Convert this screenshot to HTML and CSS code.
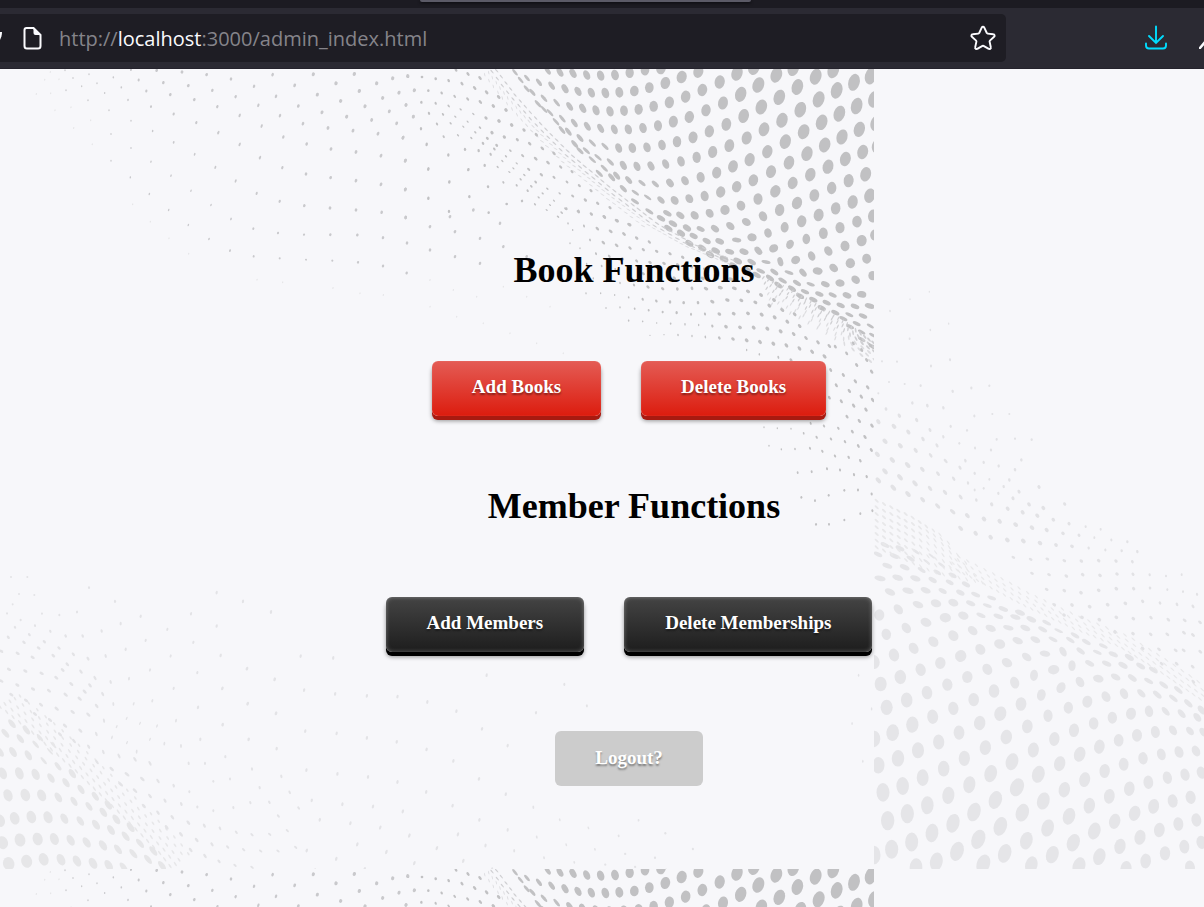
FILE: index.html
```html
<!DOCTYPE html>
<html lang="en">
<head>
<meta charset="utf-8">
<title>Library Admin</title>
<link rel="stylesheet" href="styles.css">
</head>
<body>
<header class="browser">
  <div class="tabs"><div class="active-tab"></div></div>
  <div class="toolbar">
    <div class="address">
      <svg class="edge-icon" viewBox="0 0 3 16" aria-hidden="true"><path d="M-1 2h3C2 6 .8 9-1 11z" fill="#fbfbfe"/></svg>
      <svg class="page-icon" viewBox="0 0 20 24" aria-hidden="true"><path d="M4 2h7l7 7v11a2.500 2.500 0 0 1-2.500 2.500h-11A2.500 2.500 0 0 1 2 20V4a2 2 0 0 1 2-2z" fill="none" stroke="#fbfbfe" stroke-width="2"/><path d="M11 2l7 7h-5a2 2 0 0 1-2-2z" fill="#fbfbfe"/></svg>
      <div class="url" role="textbox" aria-label="Address">http://<span class="host">localhost</span>:3000/admin_index.html</div>
      <button class="icon-button" aria-label="Bookmark this page"><svg viewBox="0 0 26 26"><path d="M11.700 2.600a1.450 1.450 0 0 1 2.600 0l2.500 5.400a1 1 0 0 0 .8.600l5.700.7a1.400 1.400 0 0 1 .8 2.500l-4.200 3.800a1 1 0 0 0-.3 1l1.200 5.600a1.400 1.400 0 0 1-2.100 1.600l-5.200-2.900a1 1 0 0 0-1 0l-5.200 2.900a1.400 1.400 0 0 1-2.100-1.600l1.200-5.600a1 1 0 0 0-.3-1l-4.200-3.800a1.400 1.400 0 0 1 .8-2.500l5.700-.7a1 1 0 0 0 .8-.6z" fill="none" stroke="#fbfbfe" stroke-width="1.900"/></svg></button>
    </div>
    <button class="icon-button download" aria-label="Downloads"><svg viewBox="0 0 24 26"><path d="M12 1.500v16M5 11l7 7 7-7M2 18.500v2a3 3 0 0 0 3 3h14a3 3 0 0 0 3-3v-2" fill="none" stroke="#00ddff" stroke-width="1.900" stroke-linecap="round"/></svg></button>
    <svg class="cut-icon" viewBox="0 0 5 12" aria-hidden="true"><path d="M1 11l5-6" stroke="#fbfbfe" stroke-width="2.500" stroke-linecap="round"/></svg>
  </div>
</header>
<main class="page">
  <svg class="waves" aria-hidden="true">
    <defs>
      <symbol id="wave-dark" viewBox="0 0 2622 2400"></symbol>
      <symbol id="wave-light" viewBox="0 0 2622 2400"></symbol>
    </defs>
    <use href="#wave-dark" width="874" height="800"/>
    <use href="#wave-dark" y="800" width="874" height="800"/>
    <use href="#wave-light" x="874" width="874" height="800"/>
  </svg>
  <div class="content">
    <h1 class="heading">Book Functions</h1>
    <div class="actions">
      <button class="btn red">Add Books</button>
      <button class="btn red">Delete Books</button>
    </div>
    <h1 class="heading">Member Functions</h1>
    <div class="actions">
      <button class="btn black">Add Members</button>
      <button class="btn black">Delete Memberships</button>
    </div>
    <button class="btn logout">Logout?</button>
  </div>
</main>
<script src="waves.js"></script>
</body>
</html>
```
FILE: styles.css
```css
* { box-sizing: border-box; }
body {
  margin: 0;
  min-height: 100vh;
  display: flex;
  flex-direction: column;
  background: #f7f7fa;
  font-family: "Liberation Serif", "Times New Roman", serif;
}
button { border: 0; font: inherit; cursor: pointer; }
.tabs {
  height: 8px;
  background: #1c1b22;
  display: flex;
  padding-left: 420px;
}
.active-tab {
  width: 331px;
  height: 2px;
  border-radius: 0 0 3px 3px;
  background: #5b5a66;
  box-shadow: 0 1px 3px #08080c;
}
.toolbar {
  display: flex;
  align-items: center;
  padding: 6px 0;
  background: #2b2a33;
  border-bottom: 1px solid #25232d;
}
.address {
  flex: 1;
  height: 48px;
  display: flex;
  align-items: center;
  padding-right: 10px;
  background: #1e1d24;
  border-radius: 0 5px 5px 0;
}
.edge-icon { width: 3px; height: 16px; margin-right: 19px; }
.page-icon { width: 21px; height: 24px; margin-right: 16px; }
.url {
  flex: 1;
  padding-top: 2px;
  font: 20px/28px "Open Sans", "Noto Sans", sans-serif;
  color: #85848a;
  white-space: nowrap;
}
.host { color: #fbfbfe; }
.icon-button {
  display: flex;
  padding: 0;
  background: none;
}
.icon-button svg { width: 26px; height: 26px; }
.download { margin: 0 31px 0 138px; }
.download svg { width: 24px; }
.cut-icon { width: 5px; height: 12px; margin-top: 10px; }
.page {
  position: relative;
  flex: 1;
  overflow: hidden;
}
.waves {
  position: absolute;
  inset: 0;
  width: 100%;
  height: 100%;
}
.content {
  position: relative;
  display: flex;
  flex-direction: column;
  align-items: center;
  padding: 181px 0 40px 54px;
}
.heading {
  margin: 0 0 70px;
  padding-left: 10px;
  font-size: 36px;
  line-height: 41px;
  color: #000;
}
.actions {
  display: flex;
  gap: 40px;
  margin-bottom: 70px;
}
.btn {
  height: 55px;
  padding: 0 40px 3px;
  border-radius: 6px;
  font-size: 19px;
  font-weight: bold;
  line-height: 22px;
  color: #fff;
  text-shadow: 0 2px 2px rgba(0, 0, 0, 0.4);
}
.red {
  background: linear-gradient(#e45c55, #dc1c0e);
  box-shadow: inset 0 0 1px rgba(255, 255, 255, 0.4), 0 4px 0 #a81a10, 0 5px 4px rgba(0, 0, 0, 0.4);
}
.black {
  padding-inline: 41px;
  background: linear-gradient(#444, #1d1d1d);
  box-shadow: inset 0 0 4px rgba(255, 255, 255, 0.35), 0 4px 0 #000, 0 5px 4px rgba(0, 0, 0, 0.4);
}
.logout {
  margin-top: 9px;
  padding-bottom: 2px;
  background: #ccc;
}
```
FILE: waves.js
```js
const NS = "http://www.w3.org/2000/svg";

// Each anchor is x y rx ry angle; a dot's shape is blended from the anchors near it.
function shapeAt(x, y, anchors) {
  let total = 0;
  const sum = [0, 0, 0];
  for (const a of anchors) {
    const w = 1 / (((x - a[0]) ** 2 + (y - a[1]) ** 2) ** 1.5 + 1);
    total += w;
    for (let i = 0; i < 3; i++) sum[i] += w * a[i + 2];
  }
  return sum.map(s => s / total);
}

function sheet(id, transform, color, anchors, text) {
  const group = document.createElementNS(NS, "g");
  group.setAttribute("transform", transform);
  group.setAttribute("fill", color);
  for (const pair of text.trim().split(/\s+/)) {
    const [x, y] = pair.split(",").map(Number);
    const [rx, ry, angle] = shapeAt(x, y, anchors);
    const dot = document.createElementNS(NS, "ellipse");
    dot.setAttribute("rx", rx.toFixed(1));
    dot.setAttribute("ry", ry.toFixed(1));
    dot.setAttribute("transform", `translate(${x} ${y}) rotate(${angle.toFixed(0)})`);
    group.append(dot);
  }
  document.getElementById(id).append(group);
}

// Dots spaced evenly along a polyline.
function along(points, step, dx = 0, dy = 0) {
  const out = [];
  let carry = 0;
  for (let i = 1; i < points.length; i++) {
    const [x1, y1] = points[i - 1], [x2, y2] = points[i];
    const len = Math.hypot(x2 - x1, y2 - y1);
    let d = carry;
    for (; d < len; d += step) {
      out.push(`${Math.round(x1 + (x2 - x1) * d / len + dx)},${Math.round(y1 + (y2 - y1) * d / len + dy)}`);
    }
    carry = d - len;
  }
  return out.join(" ");
}

const DARK = "#c1c1c3", MID = "#cfcfd2", PALE = "#dddde0", LIGHT = "#e6e6e8";

// Bold crest, upper right
sheet("wave-dark", "translate(1200 -27)", DARK, [
  [345, 37, 4, 12, -40], [534, 94, 9, 15, -30], [450, 158, 4, 14, -42], [616, 99, 11, 16, -20], [703, 93, 13, 16, 5],
  [594, 292, 4, 14, -48], [697, 264, 11, 15, -18], [743, 412, 4, 13, -55], [845, 51, 15, 19, 15], [1075, 75, 17, 24, 20],
  [1256, 118, 17, 25, 18], [1362, 67, 17, 26, 15], [868, 171, 14, 18, 10], [824, 421, 11, 14, -35], [1049, 299, 15, 20, 15],
  [1010, 380, 14, 17, 15], [1211, 215, 17, 23, 18], [1397, 343, 16, 22, 15], [1139, 450, 14, 17, 20]
], `345,37 443,32 480,37 519,40 560,45 602,47 645,45 689,38 735,30 783,25
362,60 381,54 417,67 455,77 495,86 534,94 574,98 616,99 658,97 703,93 748,83 796,69 845,51 895,35
397,97 432,115 470,128 509,139 548,145 588,151 630,154 672,152 716,148 761,139 808,127 857,110 907,90 959,66 1011,40 1062,22
380,86 414,131 450,158 487,176 523,189 562,199 602,205 643,208 685,208 729,204 774,197 820,185 868,171 918,151 969,129 1022,103 1075,75 1129,45 1180,25
432,148 468,185 505,215 540,234 577,249 615,259 656,264 697,264 741,262 786,255 831,245 879,232 928,214 979,193 1031,168 1084,141 1138,112 1192,81 1247,50 1300,30
486,210 524,252 559,272 594,292 631,306 670,316 711,319 753,318 797,312 843,304 890,292 938,276 988,257 1040,234 1092,208 1146,181 1201,149 1256,118 1310,91 1362,67 1412,48
540,272 577,299 613,325 650,347 686,360 726,369 766,372 810,369 855,362 902,352 950,338 999,319 1049,299 1102,275 1156,245 1211,215 1265,187 1318,161 1370,138 1422,118
598,340 635,352 670,386 706,398 743,412 783,420 824,421 868,416 914,408 962,396 1010,380 1060,361 1113,335 1167,308 1221,281 1274,255 1326,231 1378,208 1428,190
1231,344 1284,320 1336,297 1388,276 1432,258 1397,343`);

// Lower part of the crest, flattening toward the fold
sheet("wave-dark", "translate(1680 333)", DARK, [
  [246, 78, 5, 14, -55], [322, 100, 7, 14, -60], [404, 106, 11, 14, -40], [495, 90, 14, 15, 0], [646, 34, 15, 19, 20],
  [422, 147, 7, 13, -65], [530, 180, 7, 14, -82], [576, 172, 12, 14, -80], [641, 205, 12, 14, 60], [711, 69, 15, 19, 18],
  [929, 47, 16, 22, 15], [776, 105, 15, 19, 10], [905, 182, 15, 17, 10], [618, 246, 5, 14, -78], [707, 240, 12, 14, 60],
  [687, 278, 5, 14, -70], [773, 273, 11, 15, -80], [871, 250, 14, 15, 0], [752, 313, 5, 13, -70], [840, 309, 11, 14, -75],
  [938, 287, 13, 14, 0], [818, 345, 6, 13, -65], [905, 343, 10, 14, -80], [868, 404, 5, 13, -65], [929, 378, 8, 15, -75], [931, 438, 4, 12, -60]
], `322,100 361,106 404,106 449,100 495,90 543,77 594,57 646,34 698,9
225,64 268,94 303,115 339,131 381,144 422,147 465,146 511,138 559,126 609,109 659,90 711,69 763,46 815,24 866,2
325,145 363,160 401,168 440,183 479,184 530,180 576,172 624,159 674,142 725,124 776,105 827,85 878,66 929,47
388,190 426,204 467,212 509,215 552,215 595,212 641,205 690,193 739,177 790,160 840,143 891,125 939,108
450,224 492,237 533,243 575,246 618,246 661,245 707,240 755,228 805,213 855,198 905,182 945,165
520,258 560,268 602,273 643,276 687,278 729,278 773,273 821,264 871,250 920,236
590,285 630,294 668,302 711,309 752,313 796,313 840,309 887,299 938,287
655,315 696,326 735,335 778,342 818,345 861,346 905,343 720,348 760,359 800,368 842,376 885,379 929,378
785,384 826,398 868,404 909,408 850,416 890,431 931,438 870,440 905,456 938,466 905,478 938,500`);

// Tight pleats along the fold
const fold = [[290, 32], [345, 105], [430, 200], [520, 290], [640, 390], [770, 490], [880, 552], [1010, 605]];
const foldShape = [[290, 32, 2, 7, -42], [640, 390, 2, 8, -52], [960, 595, 2, 8, -68]];
sheet("wave-dark", "translate(1200 -27)", MID, foldShape, along(fold, 23));
sheet("wave-dark", "translate(1200 -27)", MID, foldShape, along(fold, 26, -14, 3));
const thinShape = [[290, 32, 1.500, 6, -15], [520, 290, 1.500, 7, -60], [960, 595, 1.500, 7, -68]];
sheet("wave-dark", "translate(1200 -27)", PALE, thinShape, along(fold, 19, -24, 6));
sheet("wave-dark", "translate(1200 -27)", PALE, thinShape, along(fold.slice(0, 6), 22, -36, 12));
const pleats = [[610, 285], [690, 322], [760, 362], [840, 410], [940, 480]];
const pleatShape = [[640, 300, 2, 6, 35], [800, 420, 2, 7, 28], [930, 530, 3, 8, -45]];
for (let i = 0; i < 6; i++) {
  sheet("wave-dark", "translate(1680 333)", i < 3 ? MID : PALE, pleatShape, along(pleats, 16 + i * 3, i * 5, i * 16 + 8));
}

// Valley of small dots below the fold
sheet("wave-dark", "translate(1200 -27)", DARK, [
  [24, 50, 4, 4, 0], [260, 97, 4, 7, -40], [297, 183, 5, 6, -40], [203, 185, 2, 4, -50], [409, 296, 4, 7, -45],
  [340, 325, 2, 4, -50], [450, 435, 2, 4, -50], [16, 302, 4, 6, 25], [205, 329, 4, 5, 20], [535, 455, 4, 6, -45], [320, 432, 4, 4, 0]
], `168,30 204,42 240,54 24,50 66,51 107,56 146,62 186,71 224,84 260,97 296,111
43,91 85,92 125,99 164,109 203,117 241,126 280,138 318,150 18,135 64,127 107,130 146,138 182,148 220,162 258,174 297,183 335,195 372,210 409,224
40,170 87,160 129,163 166,170 203,185 240,203 276,218 313,231 352,239 389,251 427,265 462,280
63,206 111,192 152,190 190,200 226,217 262,235 290,256 331,272 368,287 407,296 444,308 482,321 516,335
9,233 131,230 174,226 214,234 249,250 283,267 318,289 350,310 386,328 424,344 462,352 501,366 538,377 573,392
80,253 195,268 236,272 272,283 307,303 340,325 373,345 407,366 442,386 479,400 518,408 556,420 593,430 630,443
16,302 145,285 254,316 293,321 328,336 362,358 394,379 428,400 462,422 497,446 535,455 574,462 613,470 652,482 690,494
85,327 205,329 310,367 350,376 383,392 416,412 450,435 485,458 148,366 264,380 366,423 405,433 440,450 474,470
16,388 85,415 208,410 320,432 147,454 266,458 17,472`);
sheet("wave-dark", "translate(1680 333)", DARK, [
  [152, 154, 4, 7, -50], [40, 200, 2, 3, 0], [301, 289, 4, 6, -60], [140, 345, 2, 3, 0], [481, 323, 5, 8, -75],
  [523, 400, 5, 6, -60], [371, 368, 4, 5, 0], [400, 440, 2, 4, 0], [622, 446, 5, 7, -40], [740, 474, 4, 7, -40], [290, 470, 2, 2, 0]
], `20,86 56,93 133,111 170,122 207,134 72,138 112,146 152,154 192,162 230,174 268,186 24,130 38,150
90,180 130,188 170,196 210,204 250,209 290,214 330,221 368,232 30,190 60,205 108,221 148,229 188,236 230,243 270,247 312,250 353,254 394,260 435,268
48,236 80,252 125,258 166,268 206,276 250,281 301,289 343,294 385,295 428,295 470,294 512,297 66,285 100,295 140,304 180,309 222,315 264,321 308,326 352,327 396,325 438,326 481,323 523,325 564,334 603,345 642,360
78,340 122,340 164,345 206,352 248,358 289,363 330,366 371,368 414,368 457,365 502,360 544,361 586,367 628,377 667,390 704,403
138,384 180,382 224,386 266,391 308,396 350,398 393,403 435,402 478,402 521,401 564,400 605,404 644,412 682,425 719,438
206,422 248,424 290,429 332,431 375,433 416,435 457,438 498,440 540,442 581,443 622,446 662,454 701,462 738,474 774,487 808,498
270,466 312,464 354,465 396,468 436,471 478,474 519,477 560,481 600,486 640,491 679,496 718,505 756,515 793,529`);
sheet("wave-dark", "translate(1260 813)", DARK, [
  [1139, 26, 4, 6, -40], [1324, 170, 4, 7, -35], [1018, 43, 2, 4, 0], [1233, 297, 3, 5, -30], [1072, 265, 2, 3, 0], [1356, 257, 4, 7, -35], [1226, 466, 3, 4, 0]
], `1060,12 1100,17 1139,26 1177,36 1215,50 980,30 1018,43 1075,52 1113,60 1249,136 1288,153 1324,170 1358,180 1232,90 1270,105 1306,124 1343,142
1228,173 1264,184 1301,197 1338,209 1205,215 1281,230 1318,243 1356,257 1172,250 1212,258 1255,265 1297,275 1335,291
1032,262 1072,265 1113,266 1151,280 1190,292 1233,297 1275,305 1315,318 1354,330 1047,317 1084,328 1125,327 1170,325 1207,334 1245,348 1286,352 1321,362
1133,398 1175,395 1221,386 1260,390 1302,404 1340,410 1144,472 1185,482 1226,466 1273,451 1314,450 1355,462 1188,553 1227,553 1273,540 1321,521 1357,512
1246,20 1280,40 1300,10 1325,30 1350,15 1340,60 1310,75 1355,95`);

// Scattered dots, upper left
sheet("wave-dark", "translate(0 -27)", "#c9c9cc", [
  [195, 31, 2, 3, 0], [1063, 42, 5, 6, 20], [719, 253, 3, 6, 20], [1143, 287, 4, 6, 20], [333, 222, 2, 3, 0], [573, 392, 2, 4, 20], [990, 444, 4, 5, 20], [918, 599, 3, 3, 20], [546, 36, 4, 5, 20]
], `195,31 267,43 340,52 416,60 490,68 565,77 637,91 707,110 775,136 840,167 909,191 984,204 1059,212 1134,221 1209,233
393,29 470,31 546,36 620,44 693,57 762,79 828,109 895,138 966,157 1040,170 1115,180 1190,190 818,44 884,76 952,104 1022,123 1095,139 1168,154 1240,170
940,43 1008,70 1078,93 1148,114 1218,135 1063,42 1130,70 1197,98 1178,55 1243,91 1223,48
219,54 291,70 245,79 364,82 314,99 439,93 384,120 511,104 583,119 198,91 264,121 327,151 453,140 521,162 589,188 655,218 719,253 780,293 847,323 918,342 992,353 1068,362 1143,373 1216,389
652,140 719,166 785,198 850,231 920,252 993,267 1068,276 1143,287 1216,302 393,182 458,213 521,247 584,283 646,322 707,363 770,400 839,424 913,437 990,444 1068,450 1145,457 1217,473
333,222 393,264 453,305 513,347 573,392 633,435 693,477 760,506 834,519 912,524 991,524 1072,525 1149,533 1221,549
333,302 391,352 448,402 506,450 565,495 627,537 690,572 761,589 839,595 918,599 997,602 1074,607 1149,618 1220,639
1290,500 1365,515 1440,535 1290,570 1365,590 1440,610 1510,560 1580,590 1650,620 1350,470 1420,450 1500,490`);
sheet("wave-dark", "translate(0 -27)", LIGHT, [[100, 100, 2, 3, 20]], `134,59 151,36 177,58 165,151 213,142 221,204 272,181 277,253 109,102 152,100 398,433 451,485 507,535 566,581 848,667 999,684 771,659
1080,700 1150,705 1290,660 1360,690 1430,710 1290,740 1370,770 1450,790 1510,680 1580,710 1650,740 1530,820 1610,850 1690,880`);

// Pale crest, lower left
sheet("wave-dark", "translate(0 1473)", LIGHT, [
  [16, 520, 7, 16, -40], [150, 574, 3, 13, -42], [58, 640, 12, 19, -22], [198, 668, 8, 16, -35], [76, 705, 14, 19, -20],
  [267, 739, 7, 15, -35], [94, 771, 14, 19, -18], [288, 794, 9, 17, -35], [400, 881, 7, 17, -40], [60, 840, 16, 20, -15], [26, 911, 17, 20, -15], [279, 910, 11, 18, -30]
], `36,491 79,510 120,533 160,555 16,520 61,536 107,553 150,574 0,576 39,576 85,586 131,602 174,619 217,641
8,640 58,640 107,643 153,654 198,668 243,688 286,709 325,735 24,706 76,705 125,706 175,712 222,724 267,739 310,757 349,778 392,802
0,782 44,775 94,771 144,772 193,776 241,783 288,794 333,810 377,829 420,850 460,873 8,848 60,840 113,837 163,837 212,841 260,847 309,856 354,868 400,881 444,898 486,917
26,911 80,904 131,898 183,899 231,903 279,910 326,916 371,922`);
const paleFold = [[0, 440], [100, 520], [230, 635], [360, 760], [480, 880], [515, 925]];
for (let i = 0; i < 5; i++) {
  sheet("wave-dark", "translate(0 1473)", "#e7e7e9", [[100, 500, 2.500, 8 - i / 2, -34]], along(paleFold, 25 + i * 2, i * 15, -i * 8));
}
sheet("wave-dark", "translate(0 1473)", "#e3e3e6", [
  [76, 333, 4, 7, -60], [218, 456, 4, 8, -50], [381, 643, 4, 9, -50], [543, 823, 4, 8, -40], [100, 105, 3, 3, 0], [500, 300, 3, 5, 20], [744, 431, 4, 6, 20], [400, 520, 2, 5, 30], [780, 873, 3, 6, -50], [630, 700, 3, 4, 0]
], `4,274 53,280 98,292 27,328 76,333 125,340 169,353 4,363 52,375 99,387 147,392 197,404 239,416 34,404 78,421 123,434 170,446 218,456 265,464 312,482
105,462 150,480 195,497 241,512 289,522 336,532 381,548 180,523 222,543 266,560 310,576 357,588 405,598 450,610 291,606 335,627 381,643 427,657 474,663 521,677 568,695
362,673 405,692 450,708 495,722 544,732 592,741 640,752 432,738 474,758 517,772 565,788 613,797 660,805 709,817 756,824 809,823 862,812 500,802 543,823 590,840 636,853 683,861 731,869 782,873 834,873 887,862
572,870 615,888 657,904 705,916 756,922 33,51 82,51 57,102 103,105 126,161 178,165 231,156 38,133 151,214 197,228 248,228 305,213 362,191 422,169 345,124 267,83
437,241 502,208 573,161 650,98 729,124 813,156 650,198 580,247 512,288 450,330 387,356 332,366 377,268 317,288 264,296 220,283 177,264 662,286 741,326 824,358 592,338 521,385 457,422 401,431
667,385 743,431 828,460 594,442 528,482 471,498 668,494 746,538 830,566 601,538 543,558 493,551 676,590 756,627 844,649 615,610 566,610 640,664 690,657 779,683 869,697 896,744 808,727 751,728 700,743 835,768
21,160 62,180 105,197 45,202 88,224 133,245 25,232 72,247 116,264 160,287 202,313 188,330 243,335 285,354 214,372 270,376 254,395 308,402 290,438 340,432 350,500 380,475 420,490 450,538 410,575`);
sheet("wave-dark", "translate(840 1713) scale(1.148)", "#e3e3e6", [
  [63, 131, 3, 5, 10], [227, 256, 3, 5, 10], [521, 363, 3, 5, 15], [800, 490, 2, 4, -20], [351, 583, 3, 6, 20], [900, 600, 3, 3, 0], [1500, 180, 2, 4, 0]
], `54,42 139,47 63,131 144,141 227,146 307,148 385,162 461,186 540,92 669,190 743,116 528,232 595,276 802,172 66,238 148,244 227,256 305,266 383,286 453,316 520,363 590,403 662,437 731,470 806,491 885,512 937,471 1007,505 1079,546
69,340 150,350 230,358 307,371 382,397 451,433 521,470 595,496 671,515 748,535 823,547 902,559 980,569 83,419 163,429 243,435 321,448 465,508 537,537 612,551 690,569 769,581 850,587 928,593 1009,600 1085,611
104,470 184,479 262,490 338,511 410,544 479,577 554,599 632,614 711,619 792,623 872,625 953,624 1033,630 202,534 278,554 351,583 421,620 493,648 572,662 650,670 732,667 815,667 898,659 980,656 1061,659
70,550 147,572 221,599 292,629 365,665 165,633 235,669 91,602 1512,92 1546,180 1523,317 1495,218`);

// Pale crest of the second tile
sheet("wave-light", "translate(-42 1413)", "#e5e5e8", [
  [54, 43, 6, 14, -65], [215, 48, 3, 12, -50], [60, 115, 8, 17, -78], [269, 127, 6, 13, -60], [58, 225, 15, 17, 0], [144, 152, 9, 17, -75],
  [256, 233, 14, 17, -80], [382, 197, 5, 14, -70], [302, 348, 17, 18, 20], [445, 263, 7, 16, -75], [419, 312, 14, 17, -70], [596, 272, 4, 14, -65],
  [555, 341, 9, 16, -80], [712, 337, 5, 14, -65], [581, 389, 14, 17, 80], [740, 371, 7, 15, -65], [715, 416, 11, 16, -75], [866, 423, 6, 15, -60],
  [62, 432, 18, 22, 0], [421, 521, 18, 22, 15], [98, 578, 19, 25, 5], [83, 842, 20, 29, 0], [471, 742, 20, 28, 22], [355, 898, 20, 30, 20],
  [682, 485, 15, 18, 10], [813, 521, 15, 18, 10], [940, 475, 6, 16, -50], [990, 573, 9, 15, -40], [659, 643, 17, 23, 18], [831, 586, 15, 19, 0], [957, 636, 13, 18, -20], [824, 820, 17, 23, 15], [992, 772, 15, 20, -10], [640, 908, 19, 27, 20]
], `75,15 120,25 168,35 215,48 54,43 103,48 152,56 200,65 245,75 82,77 134,82 185,90 232,97 278,106 60,115 113,113 166,115 218,120 269,127 318,133
90,156 144,152 197,151 248,153 301,158 347,164 395,174 58,225 115,208 174,194 228,190 280,188 332,190 382,197 430,207 480,218
79,283 139,264 198,247 256,233 310,227 363,226 415,229 466,231 514,238 560,248 42,366 102,345 161,325 220,305 280,287 338,272 392,265 445,263 496,264 548,268 596,272 645,286
62,432 121,411 182,389 241,369 302,348 361,328 419,312 473,302 526,299 579,298 631,300 679,306 730,318 80,502 140,480 201,458 262,434 322,411 382,388 441,368 500,351 555,341 609,335 662,333 712,337 760,343 808,352
42,597 98,578 157,554 218,530 280,505 341,479 402,453 464,428 522,406 581,389 636,377 689,370 740,371 789,376 842,378 880,390
55,676 114,655 174,631 236,606 297,578 359,549 421,521 483,492 544,465 603,443 660,426 715,416 767,411 817,414 866,423 911,435 955,450
69,757 128,738 188,713 251,686 313,655 376,623 439,591 502,559 564,527 625,503 682,485 738,470 792,461 844,460 892,464 940,475 985,490 1025,510
83,842 142,821 202,796 265,766 328,734 392,701 456,665 520,630 583,597 642,571 701,550 757,533 813,521 867,514 917,514 965,521 1012,532
42,945 95,928 155,906 216,879 279,850 342,816 406,780 471,742 535,703 599,671 659,643 718,620 776,601 831,586 886,576 939,571 990,573 1030,577
168,982 229,965 291,934 355,898 421,859 487,818 550,783 613,749 674,719 734,693 791,673 849,655 904,643 957,636 1008,633 370,972 434,940 499,902 563,864 627,829 688,797 748,769 808,746 865,727 922,713 975,704 1024,698
514,975 577,944 640,908 703,873 764,844 824,820 881,799 938,783 992,772 657,978 718,950 780,919 840,892 898,870 955,852 1009,840 798,986 857,963 915,940 973,920 1024,907 990,982`);
const lightFold = [[270, 80], [370, 130], [480, 190], [640, 265], [780, 320], [900, 395], [1040, 490]];
for (let i = 0; i < 4; i++) {
  sheet("wave-light", "translate(-42 1413)", "#e9e9eb", [[300, 100, 2, 7, -45], [1000, 450, 2, 8, -48]], along(lightFold, 23 + i * 2, i * 9, -i * 10));
}
for (let i = 0; i < 8; i++) {
  sheet("wave-light", "translate(-42 573)", "#e8e8ea", [[100, 760, 3, 8, -48], [300, 860, 2, 8, -35], [400, 950, 2, 7, -30]],
    along([[50, 722 + i * 20], [150 + i * 10, 768 + i * 24], [250 + i * 18, 830 + i * 20]], 24));
}
sheet("wave-light", "translate(-42 1413)", "#e2e2e5", [[512, 58, 4, 6, -60], [743, 194, 5, 6, -50], [960, 104, 3, 4, 0], [972, 278, 4, 7, -50]],
  `460,52 512,58 562,57 613,62 664,63 716,62 768,63 817,65 516,100 567,104 619,108 668,104 720,106 771,102 819,103 869,104 918,108 965,104
560,148 613,152 663,158 716,151 769,146 821,146 870,144 922,149 969,155 1011,163 583,194 636,195 689,200 743,194 796,190 848,184 900,189 951,193 999,199
612,225 666,232 718,239 769,232 820,236 873,233 925,239 974,241 1020,247 765,276 819,281 872,283 922,283 972,278 999,285 848,325 897,328 947,331 971,331 1021,335 905,371 950,371 998,380 1000,425`);
sheet("wave-light", "translate(-42 573)", "#e2e2e5", [
  [87, 366, 3, 3, 0], [75, 544, 6, 9, -40], [257, 603, 4, 8, -40], [120, 652, 6, 11, -40], [278, 755, 5, 10, -45], [372, 777, 6, 8, -40],
  [208, 95, 2, 3, 0], [448, 462, 3, 3, 0], [371, 685, 3, 4, 0], [490, 843, 6, 8, -50], [700, 833, 3, 4, 0], [636, 859, 5, 6, -50], [300, 550, 3, 4, 0]
], `75,544 121,557 167,571 212,586 257,603 52,583 97,600 143,615 187,628 234,641 281,656 324,669 75,634 120,652 165,670 210,685 255,697 302,711 349,720 395,733 443,746 488,757
55,661 100,683 144,702 188,719 233,738 278,755 322,767 372,777 419,784 467,794 516,803 560,810 302,805 347,820 392,832 442,840 490,843 540,849 588,855 636,859 686,864 736,870 785,872 832,875
87,366 134,372 182,377 278,394 334,384 388,377 211,210 266,191 208,95 270,299 213,318 157,429 202,437 250,443 343,468 397,462 448,462 272,499 321,511 410,538 465,536 515,539
55,485 102,499 145,516 189,537 231,556 298,550 345,564 393,570 316,602 371,607 416,618 465,629 484,600 371,685 431,680 477,695 537,681 459,715 507,733 550,744 614,732 580,779 627,791 677,800 722,808
609,820 657,826 703,833 754,840 802,845 532,767 66,304 111,305 90,153 150,118 149,236 55,400 78,447 118,467 170,480 210,510 250,530 300,623 344,640 388,658 344,690 415,700 448,660`);
```
